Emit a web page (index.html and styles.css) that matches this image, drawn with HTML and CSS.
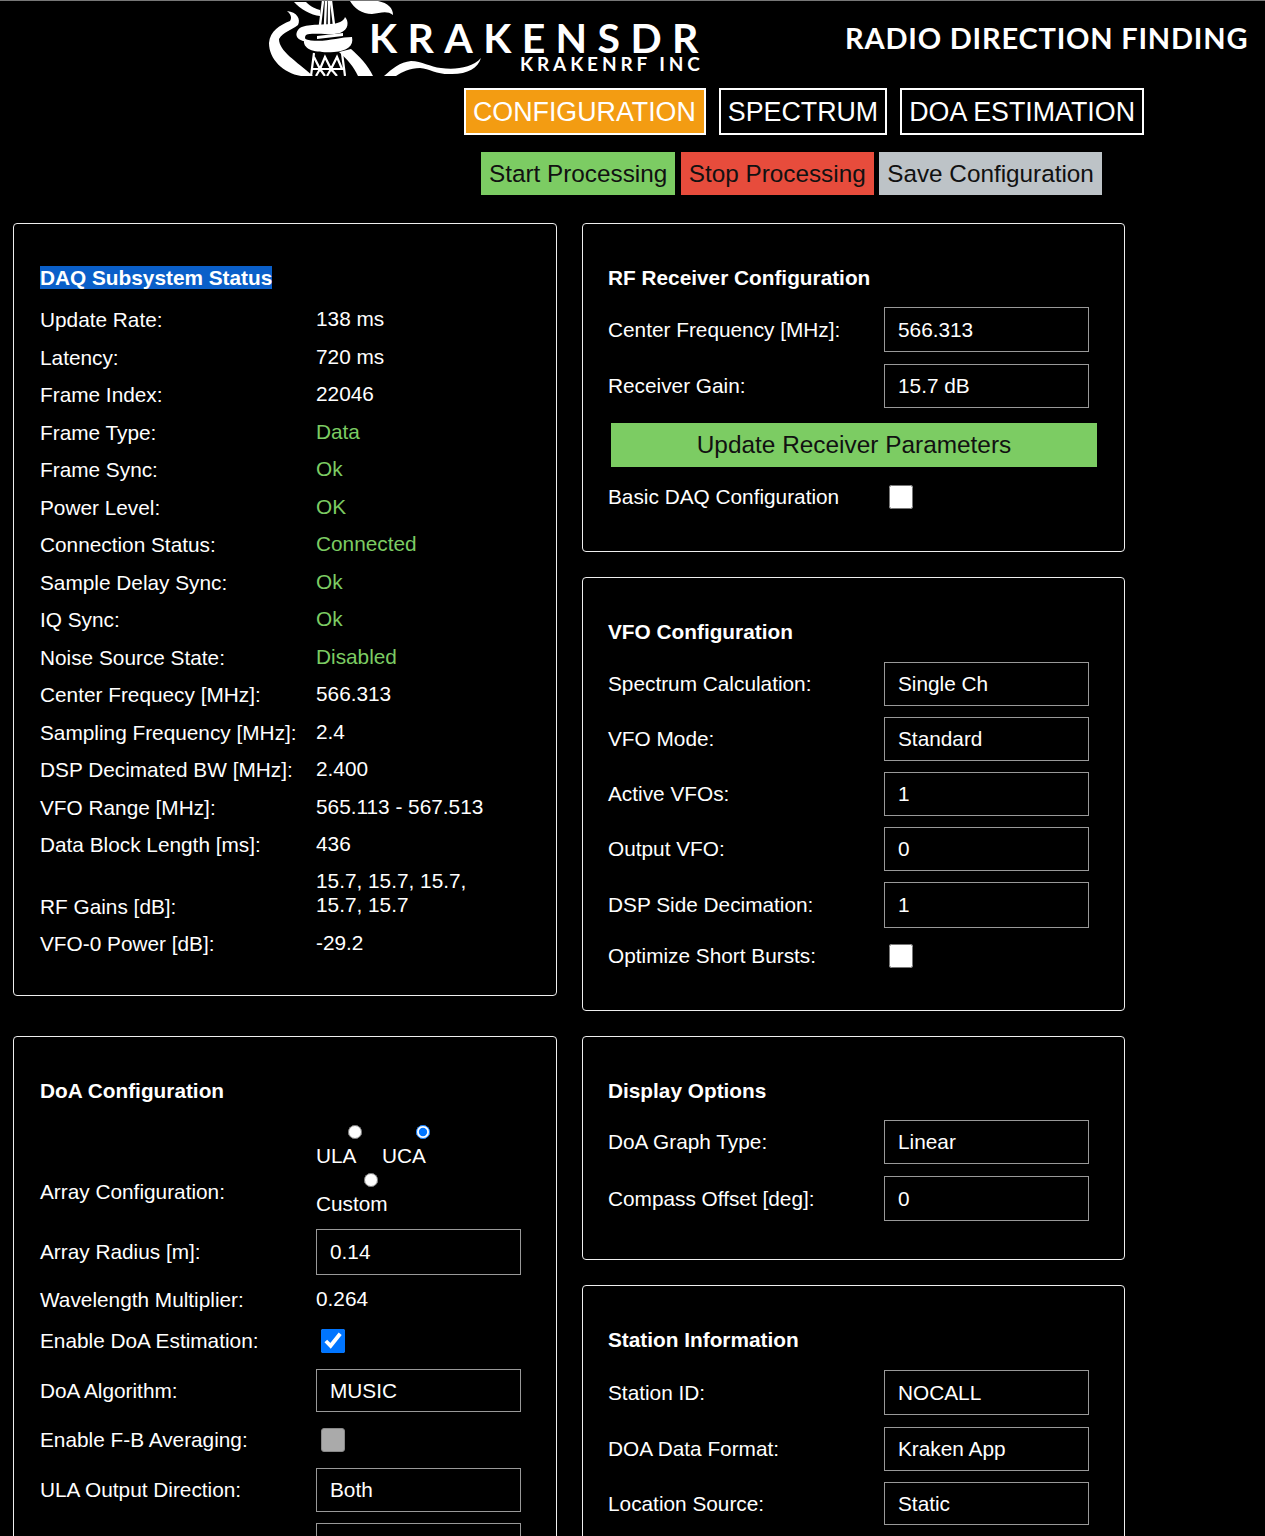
FILE: index.html
```html
<!DOCTYPE html>
<html lang="en">
<head>
    <meta charset="UTF-8">
    <meta name="viewport" content="width=device-width, initial-scale=1.0">
    <title>KrakenSDR - Radio Direction Finding</title>
    <link rel="stylesheet" href="styles.css">
</head>
<body>

<div class="header">
    <div class="logo">
        <svg class="logo-art" width="434" height="75" viewBox="268 0 434 75">
            <!-- left tentacle -->
            <path fill="#fff" d="M287 10 C297 11 301 18 298 24 C292 29 283 31 279 38 C279 50 296 60 313 75 L301 75 C283 72 269 58 269 42 C270 30 280 24 290 20 C292 17 291 13 287 10 Z"/>
            <!-- top tentacles -->
            <path fill="#fff" d="M294 1 L306 1 C311 6 316 8 320 9 L320 15 C311 14 300 8 294 1 Z"/>
            <path fill="#fff" d="M350 0 L378 0 C388 2 393 7 393 14 C387 9 380 12 372 13 C362 13 354 7 350 0 Z"/>
            <!-- tower -->
            <path fill="none" stroke="#fff" stroke-width="2.4" d="M320 24 L323 0 M325 24 L326 0 M329 24 L329 0 M334 24 L331 0"/>
            <path fill="none" stroke="#fff" stroke-width="2.2" d="M314 52 L311 75 M342 52 L345 75 M314 56 L320 68 L325 56 L331 68 L337 56 L342 68 M312 68 L344 68 M320 68 L316 75 M320 68 L325 75 M331 68 L327 75 M331 68 L337 75"/>
            <!-- wrapped rings -->
            <path fill="#fff" d="M298 29 C302 23 316 24 330 23 C338 23 344 20 345 16 C349 20 349 29 340 32 C328 35 313 31 306 34 C304 37 305 39 310 40 L303 40 C296 38 295 33 298 29 Z"/>
            <path fill="#fff" d="M304 38 C322 43 338 36 352 36 C354 45 347 50 334 51 C318 52 302 50 304 38 Z"/>
            <path fill="#fff" d="M317 35 L343 32 L343 35 L317 38 Z"/>
            <!-- right tentacle -->
            <path fill="#fff" d="M339 51 L351 48 C359 55 368 64 373 75 L358 75 C354 66 347 58 339 51 Z"/>
            <!-- swoosh under the name -->
            <path fill="#fff" d="M384 75 C392 68 400 61 411 60 C422 60 430 66 441 67 C455 69 472 67 481 57 C478 67 468 73 452 73 C438 74 430 68 420 67 C410 67 402 71 396 75 Z"/>
        </svg>
        <div class="logo-name">KRAKENSDR</div>
        <div class="logo-sub">KRAKENRF INC</div>
    </div>
    <div class="tagline">RADIO DIRECTION FINDING</div>
</div>

<div class="tabs">
    <a class="tab tab-active">CONFIGURATION</a>
    <a class="tab">SPECTRUM</a>
    <a class="tab">DOA ESTIMATION</a>
</div>

<div class="actions">
    <button class="btn btn-green">Start Processing</button>
    <button class="btn btn-red">Stop Processing</button>
    <button class="btn btn-grey">Save Configuration</button>
</div>

<div class="columns">
    <div class="col col-left">
        <div class="card card-daq">
            <h2 class="title title-daq"><span class="selected">DAQ Subsystem Status</span></h2>
            <div class="stat"><span class="name">Update Rate:</span><span class="val">138 ms</span></div>
            <div class="stat"><span class="name">Latency:</span><span class="val">720 ms</span></div>
            <div class="stat"><span class="name">Frame Index:</span><span class="val">22046</span></div>
            <div class="stat"><span class="name">Frame Type:</span><span class="val ok">Data</span></div>
            <div class="stat"><span class="name">Frame Sync:</span><span class="val ok">Ok</span></div>
            <div class="stat"><span class="name">Power Level:</span><span class="val ok">OK</span></div>
            <div class="stat"><span class="name">Connection Status:</span><span class="val ok">Connected</span></div>
            <div class="stat"><span class="name">Sample Delay Sync:</span><span class="val ok">Ok</span></div>
            <div class="stat"><span class="name">IQ Sync:</span><span class="val ok">Ok</span></div>
            <div class="stat"><span class="name">Noise Source State:</span><span class="val ok">Disabled</span></div>
            <div class="stat"><span class="name">Center Frequecy [MHz]:</span><span class="val">566.313</span></div>
            <div class="stat"><span class="name">Sampling Frequency [MHz]:</span><span class="val">2.4</span></div>
            <div class="stat"><span class="name">DSP Decimated BW [MHz]:</span><span class="val">2.400</span></div>
            <div class="stat"><span class="name">VFO Range [MHz]:</span><span class="val">565.113 - 567.513</span></div>
            <div class="stat"><span class="name">Data Block Length [ms]:</span><span class="val">436</span></div>
            <div class="stat stat-tall"><span class="name">RF Gains [dB]:</span><span class="val">15.7, 15.7, 15.7,<br>15.7, 15.7</span></div>
            <div class="stat"><span class="name">VFO-0 Power [dB]:</span><span class="val">-29.2</span></div>
        </div>

        <div class="card">
            <h2 class="title">DoA Configuration</h2>
            <div class="row row-radios">
                <span class="name name-radios">Array Configuration:</span>
                <div class="radios">
                    <label class="radio radio-ula"><input type="radio" name="array">ULA</label>
                    <label class="radio radio-uca"><input type="radio" name="array" checked>UCA</label>
                    <label class="radio radio-custom"><input type="radio" name="array">Custom</label>
                </div>
            </div>
            <div class="row row-short"><span class="name">Array Radius [m]:</span><div class="field field-xl">0.14</div></div>
            <div class="stat stat-wave"><span class="name">Wavelength Multiplier:</span><span class="val">0.264</span></div>
            <div class="row check"><span class="name">Enable DoA Estimation:</span><input type="checkbox" checked></div>
            <div class="row check-next"><span class="name">DoA Algorithm:</span><div class="field field-short">MUSIC</div></div>
            <div class="row check"><span class="name">Enable F-B Averaging:</span><input class="off" type="checkbox" disabled></div>
            <div class="row"><span class="name">ULA Output Direction:</span><div class="field">Both</div></div>
            <div class="row"><span class="name"></span><div class="field"></div></div>
        </div>
    </div>

    <div class="col col-right">
        <div class="card">
            <h2 class="title">RF Receiver Configuration</h2>
            <div class="row row-wide"><span class="name">Center Frequency [MHz]:</span><div class="field field-tall">566.313</div></div>
            <div class="row row-btn"><span class="name">Receiver Gain:</span><div class="field">15.7 dB</div></div>
            <button class="btn btn-green btn-update">Update Receiver Parameters</button>
            <div class="row check"><span class="name">Basic DAQ Configuration</span><input type="checkbox"></div>
        </div>

        <div class="card">
            <h2 class="title title-wide">VFO Configuration</h2>
            <div class="row"><span class="name">Spectrum Calculation:</span><div class="field">Single Ch</div></div>
            <div class="row"><span class="name">VFO Mode:</span><div class="field">Standard</div></div>
            <div class="row"><span class="name">Active VFOs:</span><div class="field">1</div></div>
            <div class="row"><span class="name">Output VFO:</span><div class="field">0</div></div>
            <div class="row row-dsp"><span class="name">DSP Side Decimation:</span><div class="field field-xl">1</div></div>
            <div class="row check"><span class="name">Optimize Short Bursts:</span><input type="checkbox"></div>
        </div>

        <div class="card">
            <h2 class="title">Display Options</h2>
            <div class="row row-wide"><span class="name">DoA Graph Type:</span><div class="field">Linear</div></div>
            <div class="row"><span class="name">Compass Offset [deg]:</span><div class="field field-tall">0</div></div>
        </div>

        <div class="card">
            <h2 class="title title-wide">Station Information</h2>
            <div class="row row-wide"><span class="name">Station ID:</span><div class="field field-tall">NOCALL</div></div>
            <div class="row"><span class="name">DOA Data Format:</span><div class="field">Kraken App</div></div>
            <div class="row"><span class="name">Location Source:</span><div class="field field-short">Static</div></div>
        </div>
    </div>
</div>

</body>
</html>
```

FILE: styles.css
```css
html, body {
    height: 1536px;
    overflow: hidden;
}
body {
    margin: 0;
    background-color: #000;
    color: #fff;
    font-family: "Liberation Sans", Arial, sans-serif;
    font-size: 20.8px;
    border-top: 1px solid #777;
    box-sizing: border-box;
}

/* header */
.header {
    display: flex;
    align-items: center;
    height: 75px;
    padding-left: 268px;
}
.logo {
    position: relative;
    width: 434px;
    height: 75px;
}
.logo-art {
    display: block;
}
.logo-name {
    position: absolute;
    left: 101px;
    top: 20px;
    font-family: Lato, sans-serif;
    font-weight: bold;
    font-size: 41px;
    line-height: 34px;
    letter-spacing: 10.4px;
    white-space: nowrap;
}
.logo-sub {
    position: absolute;
    left: 252px;
    top: 54px;
    font-family: Lato, sans-serif;
    font-weight: bold;
    font-size: 19px;
    line-height: 18px;
    letter-spacing: 3.9px;
    white-space: nowrap;
}
.tagline {
    margin-left: 143px;
    padding-bottom: 2px;
    font-family: Lato, sans-serif;
    font-weight: bold;
    font-size: 29px;
    letter-spacing: 0.8px;
    white-space: nowrap;
}

/* tabs */
.tabs {
    display: flex;
    gap: 13px;
    margin-top: 12px;
    padding-left: 464px;
}
.tab {
    display: flex;
    align-items: center;
    height: 47px;
    padding: 1px 7px 0;
    border: 2px solid #fff;
    box-sizing: border-box;
    font-size: 26.8px;
}
.tab-active {
    padding-right: 8px;
    background-color: #f39c12;
}

.actions {
    display: flex;
    gap: 5.5px;
    margin-top: 17px;
    padding-left: 481px;
}
.btn {
    height: 43px;
    padding: 0 8px;
    border: none;
    color: #111;
    font-family: "Liberation Sans", Arial, sans-serif;
    font-size: 24.3px;
}
.btn-green {
    background-color: #7ccc63;
}
.btn-red {
    background-color: #e74c3c;
}
.btn-grey {
    background-color: #bdc3c7;
}
.btn-update {
    display: block;
    width: 486px;
    height: 44px;
    margin: 0 0 18px 3px;
    font-size: 24.4px;
}

/* cards */
.columns {
    display: flex;
    gap: 25px;
    margin-top: 28px;
    padding-left: 13px;
}
.col {
    display: flex;
    flex-direction: column;
    gap: 25px;
    width: 544px;
}
.col-left {
    gap: 40px;
}
.col-right {
    width: 543px;
}
.card {
    padding: 42px 26px 28px;
    border: 1.5px solid #eee;
    border-radius: 4px;
    box-sizing: border-box;
}
.col-right .card {
    padding-left: 25px;
}
.card-daq {
    padding-bottom: 32px;
}
.title {
    margin: 0 0 17px;
    font-size: 20.8px;
    line-height: 24px;
}
.title-daq {
    margin-bottom: 11px;
}
.title-wide {
    margin-bottom: 18px;
}
.selected {
    background-color: #0a5fc9;
}

.name {
    display: block;
    flex: none;
    width: 276px;
    white-space: nowrap;
}

/* read only status rows */
.stat {
    display: flex;
    align-items: flex-end;
    height: 37.5px;
}
.stat .name {
    line-height: 37.5px;
}
.val {
    line-height: 35.5px;
    padding-bottom: 2px;
}
.ok {
    color: #7ccc63;
}
.stat-tall {
    height: 61.5px;
}
.stat-tall .val {
    line-height: 24px;
    padding-bottom: 8px;
}
.stat-wave {
    margin-bottom: 11px;
}

/* form rows */
.row {
    display: flex;
    align-items: center;
    margin-bottom: 11px;
}
.row:last-child {
    margin-bottom: 10px;
}
.row-wide {
    margin-bottom: 12px;
}
.row-btn {
    margin-bottom: 15px;
}
.row-short {
    margin-bottom: 6px;
}
.check-next {
    margin-bottom: 16px;
}
.check {
    margin-bottom: 16px;
}
.check:last-child {
    margin-bottom: 14px;
}
.field {
    display: flex;
    align-items: center;
    flex: none;
    width: 205px;
    height: 44px;
    padding: 0 13px;
    border: 1px solid #999;
    box-sizing: border-box;
}
.field-tall {
    height: 45px;
}
.field-xl {
    height: 46px;
}
.field-short {
    height: 43px;
}
.row-dsp {
    margin-bottom: 16px;
}
input[type="checkbox"] {
    flex: none;
    width: 24px;
    height: 24px;
    margin: 0 0 0 5px;
}
input.off {
    appearance: none;
    background-color: #aaa;
    border: 1px solid #888;
    border-radius: 3px;
    box-sizing: border-box;
}

/* array radios */
.row-radios {
    align-items: flex-end;
    margin-top: 22px;
    margin-bottom: 8px;
}
.name-radios {
    padding-bottom: 17px;
}
.radios {
    display: flex;
    flex-wrap: wrap;
    column-gap: 20px;
    width: 205px;
}
.radio {
    display: block;
    height: 48px;
    line-height: 24px;
}
.radio input {
    display: block;
    width: 14px;
    height: 14px;
    margin: 0 0 5px 32px;
    padding: 0;
}
.radio-uca input {
    margin-left: 34px;
}
.radio-custom {
    flex-basis: 100%;
}
.radio-custom input {
    margin-left: 48px;
}
```
